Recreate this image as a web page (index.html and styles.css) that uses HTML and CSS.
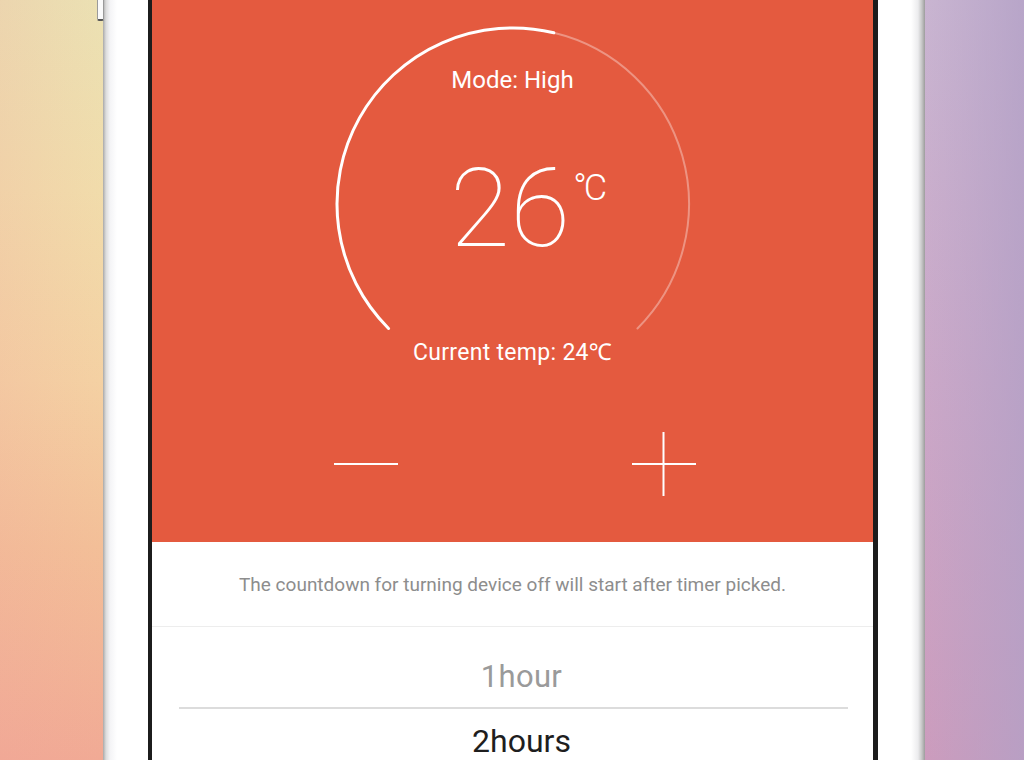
FILE: index.html
```html
<!DOCTYPE html>
<html lang="en">
<head>
<meta charset="utf-8">
<title>Heater</title>
<link rel="stylesheet" href="styles.css">
</head>
<body>
<div class="stage">
  <div class="bg-left"></div>
  <div class="phone">
    <div class="side-button"></div>
    <div class="bezel-left"></div>
    <div class="screen">
      <section class="hero">
        <div class="dial">
          <svg class="arc" width="360" height="360" viewBox="0 0 360 360">
            <path d="M 55.55 304.45 A 176 176 0 0 1 220.78 8.79" fill="none" stroke="#ffffff" stroke-width="3" stroke-linecap="round"/>
            <path d="M 220.78 8.79 A 176 176 0 0 1 304.45 304.45" fill="none" stroke="rgba(255,255,255,0.35)" stroke-width="2" stroke-linecap="round"/>
          </svg>
          <div class="mode">Mode: High</div>
          <div class="temp"><span class="temp-value">26</span><span class="temp-unit">°C</span></div>
          <div class="current">Current temp: 24℃</div>
        </div>
        <div class="controls">
          <svg class="ctl" width="64" height="64" viewBox="0 0 64 64"><line x1="0" y1="32" x2="64" y2="32" stroke="#fff" stroke-width="2"/></svg>
          <svg class="ctl" width="64" height="64" viewBox="0 0 64 64"><line x1="0" y1="32" x2="64" y2="32" stroke="#fff" stroke-width="2"/><line x1="31.5" y1="0" x2="31.5" y2="64" stroke="#fff" stroke-width="2"/></svg>
        </div>
      </section>
      <section class="timer">
        <p class="hint">The countdown for turning device off will start after timer picked.</p>
        <div class="picker">
          <div class="pick pick-dim">1hour</div>
          <div class="pick pick-active">2hours</div>
        </div>
      </section>
    </div>
    <div class="bezel-right"></div>
  </div>
  <div class="bg-right"></div>
</div>
</body>
</html>
```
FILE: styles.css
```css
html, body {
  margin: 0;
  padding: 0;
}
body {
  width: 1024px;
  height: 760px;
  overflow: hidden;
  font-family: Roboto, "Noto Sans", "Liberation Sans", sans-serif;
}
.stage {
  display: flex;
  width: 1024px;
  height: 760px;
}
.bg-left {
  width: 103px;
  flex: none;
  background:
    linear-gradient(to right, rgba(240,160,155,0.18) 0%, rgba(240,160,155,0) 100%),
    linear-gradient(to bottom, #ebe1b3 0%, #f1dcab 25%, #f4d1a3 50%, #f3bf98 72%, #f1aa95 100%);
}
.bg-right {
  flex: 1;
  background:
    linear-gradient(to right, rgba(178,160,198,0) 0%, rgba(178,160,198,0.75) 100%),
    linear-gradient(to bottom, #c9b5d1 0%, #cba8c8 50%, #cc9cbd 100%);
}
.phone {
  position: relative;
  width: 822px;
  flex: none;
  display: flex;
  background: linear-gradient(to right, #a9a9a9 0px, #dcdcdc 3px, #f4f4f6 7px, #ffffff 14px, #ffffff 808px, #ececee 815px, #c4c4c4 819px, #9c9c9c 822px);
}
.side-button {
  position: absolute;
  left: -6px;
  top: -4px;
  width: 5px;
  height: 22px;
  background: #fafafa;
  border: 1px solid #9a9a9a;
  border-bottom: 2px solid #555;
  border-radius: 0 0 2px 2px;
}
.bezel-left {
  width: 45px;
  flex: none;
  border-right: 4px solid #1c1c1c;
}
.bezel-right {
  width: 47px;
  flex: none;
  border-left: 5px solid #1c1c1c;
}
.screen {
  width: 721px;
  flex: none;
  background: #ffffff;
  display: flex;
  flex-direction: column;
  overflow: hidden;
}
.hero {
  flex: none;
  height: 542px;
  background: #e45a3f;
  color: #ffffff;
  display: flex;
  flex-direction: column;
  align-items: center;
}
.dial {
  position: relative;
  width: 360px;
  height: 360px;
  margin-top: 24px;
  display: flex;
  flex-direction: column;
  align-items: center;
}
.arc {
  position: absolute;
  left: 0;
  top: 0;
}
.mode {
  margin-top: 42px;
  font-size: 24px;
  line-height: 28px;
}
.temp {
  margin-top: 63px;
  display: flex;
  align-items: flex-start;
  margin-left: 32px;
}
.temp-value {
  font-size: 110px;
  line-height: 104px;
  font-weight: 100;
}
.temp-unit {
  font-size: 36px;
  line-height: 36px;
  font-weight: 300;
  letter-spacing: -3px;
  margin-top: 13px;
  margin-left: 3px;
  padding-right: 3px;
}
.current {
  margin-top: 78px;
  font-size: 23px;
  line-height: 27px;
  letter-spacing: 0.3px;
}
.controls {
  display: flex;
  gap: 234px;
  margin-top: 48px;
  margin-left: 5px;
}
.ctl {
  display: block;
}
.timer {
  flex: none;
  display: flex;
  flex-direction: column;
}
.hint {
  margin: 0;
  height: 84px;
  border-bottom: 1px solid #ededed;
  display: flex;
  align-items: center;
  justify-content: center;
  font-size: 19px;
  color: #8d8d8d;
}
.picker {
  padding-top: 20px;
}
.pick {
  text-align: center;
  padding-left: 18px;
}
.pick-dim {
  height: 60px;
  line-height: 60px;
  font-size: 31px;
  letter-spacing: 0.3px;
  color: #9a9a9a;
  margin: 0 25px 0 27px;
  padding-left: 16px;
  border-bottom: 2px solid #dcdcdc;
}
.pick-active {
  height: 64px;
  line-height: 64px;
  font-size: 32px;
  color: #1e1e1e;
}
```
